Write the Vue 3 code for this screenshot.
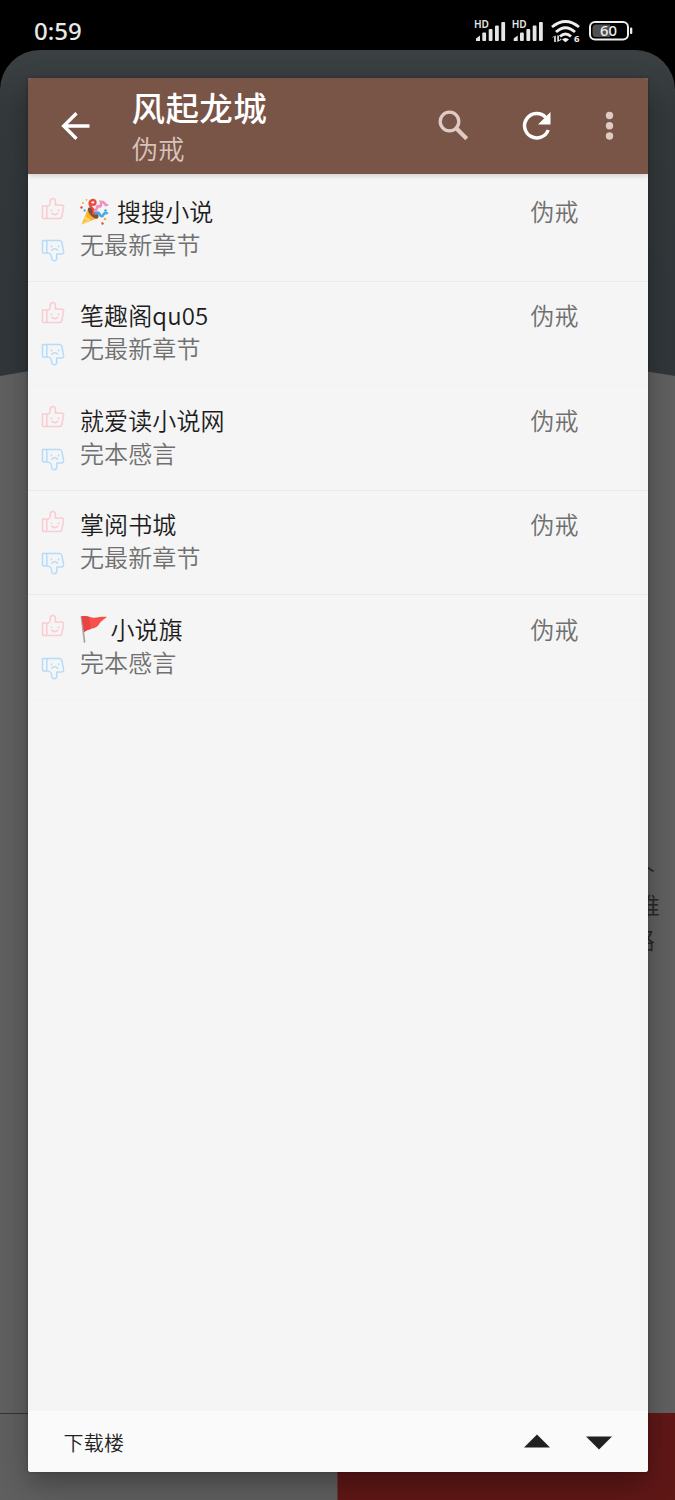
<script setup>
const sources = [
  { name: '搜搜小说', emoji: 'party', latest: '无最新章节', author: '伪戒' },
  { name: '笔趣阁qu05', latest: '无最新章节', author: '伪戒', faint: true },
  { name: '就爱读小说网', latest: '完本感言', author: '伪戒' },
  { name: '掌阅书城', latest: '无最新章节', author: '伪戒' },
  { name: '小说旗', emoji: 'flag', latest: '完本感言', author: '伪戒', faint: true },
]
</script>

<template>
  <div class="screen">
    <header class="status">
      <span class="clock">0:59</span>
      <svg class="indicators" width="162" height="30" viewBox="0 0 162 30">
        <g v-for="x in [0, 37.7]" :key="x" :transform="`translate(${x} 0)`" fill="#e6e6e6">
          <text x="0" y="13" font-size="10" font-weight="600" textLength="15" lengthAdjust="spacingAndGlyphs">HD</text>
          <path d="M2 26v-2.500l4-3V26z" />
          <rect x="8.3" y="17.5" width="3.8" height="8.5" rx="1" />
          <rect x="14.7" y="14" width="3.8" height="12" rx="1" />
          <rect x="21" y="10.5" width="3.8" height="15.5" rx="1" />
          <rect x="27.3" y="7" width="3.8" height="19" rx="1" />
        </g>
        <g fill="none" stroke="#eee" stroke-width="2.900">
          <path d="M78 12Q91.500 1 105 12" />
          <path d="M82 17Q91.500 8.500 101 17" />
          <path d="M86 21.500Q91.500 16.500 97 21.500" />
        </g>
        <path d="M88 24.500a4.600 4.600 0 0 1 7 0l-3.500 2.800z" fill="#eee" />
        <path d="M77.500 23.500l2.700-2.700V27h1.600v-6.500M83.300 27v-6.500h1.600v5l2.300-2.300v1.800z" fill="#eee" />
        <text x="100" y="27.300" font-size="9.500" font-weight="700" fill="#eee">6</text>
        <rect x="116" y="7" width="38" height="17.500" rx="5" fill="none" stroke="#eee" stroke-width="2" />
        <path d="M122 9.500h14v12.500h-14a3.500 3.500 0 0 1-3.500-3.500v-5.500a3.500 3.500 0 0 1 3.500-3.500z" fill="#505050" />
        <rect x="156" y="12.500" width="2.300" height="6.500" rx="1" fill="#eee" />
        <text x="126" y="21.200" font-size="14.500" font-weight="500" fill="#eee" textLength="17" lengthAdjust="spacingAndGlyphs">60</text>
      </svg>
    </header>

    <div class="page">
      <svg class="sheet" width="675" height="1450" viewBox="0 0 675 1450">
        <path d="M0 326Q337 266 675 326V1363H0z" fill="#606060" />
        <path d="M0 1363H338V1450H0z" fill="#5f5f5f" />
        <path d="M0 1363.500H338" stroke="#333" />
        <path d="M337.500 1363H675V1450H337.500z" fill="#5f1716" />
      </svg>
      <p class="intro"><span class="tail">个</span><span>唯</span><span class="tail">路</span></p>
    </div>

    <main class="dialog">
      <header class="toolbar">
        <svg class="back" width="30" height="30" viewBox="0 0 30 30">
          <path d="M28.500 15H3M15.500 2.200L2.700 15l12.800 12.800" fill="none" stroke="#fff" stroke-width="3.400" />
        </svg>
        <div class="heading">
          <h1>风起龙城</h1>
          <p>伪戒</p>
        </div>
        <div class="actions">
          <svg width="32" height="32" viewBox="0 0 32 32" fill="none" stroke="#e0cbc4">
            <circle cx="12.500" cy="11.500" r="9.300" stroke-width="3.300" />
            <path d="M19.500 18.500l10.200 10.200" stroke-width="4.200" />
          </svg>
          <svg width="32" height="32" viewBox="0 0 32 32">
            <path d="M24.500 7.200A12.200 12.200 0 1 0 27.200 20" fill="none" stroke="#fff" stroke-width="3.500" />
            <path d="M29.500 2v12.500H17z" fill="#fff" />
          </svg>
          <svg width="10" height="32" viewBox="0 0 10 32" fill="#e0cbc4">
            <circle cx="4.500" cy="5.500" r="3.700" /><circle cx="4.500" cy="15.700" r="3.700" /><circle cx="4.500" cy="26" r="3.700" />
          </svg>
        </div>
      </header>

      <ul class="list">
        <li v-for="item in sources" :key="item.name" class="row" :class="{ faint: item.faint }">
          <div class="votes">
            <svg class="like" width="24" height="24" viewBox="0 0 24 24">
              <g class="hand">
                <path d="M1.500 9h4.300v12.500H2.500a1 1 0 0 1-1-1zM5.800 9.500C9 9 9.300 7.500 9.300 4.500C9.300 .5 14.400.5 14.400 4.500V8h6.200c1.500 0 2.300 1 2 2.300l-1.700 9.200c-.3 1.300-1 2-2.300 2H5.800" />
                <path d="M10.500 13v.7M17.500 13v.7M10.800 16.200q3 2.800 6 0" />
              </g>
            </svg>
            <svg class="dislike" width="24" height="24" viewBox="0 0 24 24">
              <g class="hand">
                <path d="M1.500 2.500h4.300V15H2.500a1 1 0 0 1-1-1zM5.800 2.500h12.800c1.300 0 2 .7 2.300 2l1.700 9.200c.3 1.300-.5 2.300-2 2.300h-4.800v3.800c0 4-5.200 4-5.200 0c0-3-.8-4.600-4.800-4.800" />
                <path d="M10.500 8v.7M17.500 8v.7M10.800 12.200q3-3 6 0" />
              </g>
            </svg>
          </div>
          <div class="source">
            <div class="name">
              <svg v-if="item.emoji === 'party'" class="party" width="29" height="28" viewBox="0 0 29 28">
                <path d="M1.500 26.500L8.500 9.500Q14 12 18 20z" fill="#f6b52e" />
                <path d="M1.500 26.500l4-4 2 1.500zM5 18l6 4-3 1.500-4-2.500z" fill="#fdd663" />
                <ellipse cx="13.200" cy="15" rx="3.400" ry="7" transform="rotate(-42 13.200 15)" fill="#8c4b35" />
                <path d="M12.500 16.500C17 10 9 10 9.500 5.500C10 1 16 1 15.500 4.500C15 8 10 7 9.500 4" fill="none" stroke="#e94b40" stroke-width="2.300" />
                <path d="M14 14c2-2 4-3.500 3-6.500c1 1 4 2 4-1c0-3 1.500-4 4-.500c1 1.800 2 1 2.500 0" fill="none" stroke="#ef8fc4" stroke-width="2.700" />
                <path d="M15 16.500c2-3 4-2 4.500-.500c.5 2.500 3 3 4 .500c1-2 3-2 4-.500" fill="none" stroke="#48a9e6" stroke-width="2.700" />
                <g fill="#f4b22c"><circle cx="3" cy="5" r="1" /><circle cx="6.500" cy="1.800" r=".9" /><circle cx="20" cy="3" r=".9" /><circle cx="25" cy="21" r="1.300" /></g>
                <path d="M1 8l2 1-1 2-2-1zM22 24l2 1-1 2-2-1z" fill="#e94b40" />
                <path d="M4 11l2 1-1 2-1.500-1zM25 11l2 1-1 2-2-1z" fill="#43a5df" />
              </svg>
              <svg v-if="item.emoji === 'flag'" class="flag" width="28" height="28" viewBox="0 0 28 28">
                <path d="M1.500 2l3 25" stroke="#a8a8a8" stroke-width="1.800" stroke-linecap="round" />
                <path d="M1.500 1.500c5-1.500 9 1.500 13 1.200c4-.2 8-1.200 12.500-.7c-4 3-6 4-8.500 8c-2.500 4-9 3-14.500 7z" fill="#f8504b" />
                <path d="M1.500 1.500c3-.8 5-.5 7.500.5l2 12c-2.500.5-4.500 1.300-7 3z" fill="#e94441" />
              </svg>
              <span>{{ item.name }}</span>
            </div>
            <div class="latest">{{ item.latest }}</div>
          </div>
          <div class="author">{{ item.author }}</div>
        </li>
      </ul>

      <footer class="footer">
        <span class="current">下载楼</span>
        <svg width="26" height="14" viewBox="0 0 26 14"><path d="M0 13.500L13 .5l13 13z" fill="#202020" /></svg>
        <svg class="down" width="26" height="14" viewBox="0 0 26 14"><path d="M0 .5h26l-13 13z" fill="#202020" /></svg>
      </footer>
    </main>
  </div>
</template>

<style>
body {
  background: #000;
}
</style>

<style scoped>
.screen {
  position: relative;
  width: 675px;
  height: 1500px;
  overflow: hidden;
  background: #000;
  font-family: "Noto Sans CJK SC", "Noto Sans", sans-serif;
}
.status {
  display: flex;
  justify-content: space-between;
  height: 50px;
  padding: 0 39px 0 34px;
  color: #e8e8e8;
}
.clock {
  font: 500 24px/62px "Noto Sans", sans-serif;
}
.indicators {
  margin-top: 15px;
  font-family: "Noto Sans", sans-serif;
}
.page {
  position: relative;
  height: 1450px;
  border-radius: 40px 40px 0 0;
  overflow: hidden;
  background: linear-gradient(#3b4042, #34393b 60px, #30363a 320px);
}
.sheet {
  display: block;
}
.intro {
  position: absolute;
  left: 636px;
  top: 804px;
  display: flex;
  flex-direction: column;
  margin: 0;
  color: #282828;
  font-size: 24px;
  font-weight: 350;
  line-height: 34px;
}
.tail {
  margin-left: -5px;
}
.dialog {
  position: absolute;
  left: 27.5px;
  top: 77.500px;
  width: 620px;
  height: 1394.500px;
  display: flex;
  flex-direction: column;
  border-radius: 3px;
  overflow: hidden;
  background: #f5f5f5;
  box-shadow: 0 12px 28px rgba(0, 0, 0, .3), 0 0 3px rgba(0, 0, 0, .25);
}
.toolbar {
  flex: none;
  display: flex;
  align-items: center;
  height: 96.500px;
  padding: 0 33px;
  box-sizing: border-box;
  background: #795548;
  box-shadow: 0 1px 6px rgba(0, 0, 0, .2);
  z-index: 1;
}
.heading {
  margin-left: 41px;
  flex: 1;
}
.heading h1 {
  margin: 0;
  font-weight: 500;
  font-size: 33.5px;
  letter-spacing: .4px;
  line-height: 44px;
  color: #fff;
}
.heading p {
  margin: 0;
  font-size: 26.5px;
  font-weight: 350;
  line-height: 38px;
  color: #d7c3bb;
}
.actions {
  display: flex;
  align-items: center;
  gap: 52px;
}
.list {
  flex: 1;
  margin: 0;
  padding: 3.600px 0 0;
  list-style: none;
}
.row {
  display: flex;
  box-sizing: border-box;
  height: 104.400px;
  padding: 16.500px 69px 0 13px;
  border-bottom: 1px solid #e9e9e9;
}
.row.faint {
  border-bottom-color: #f1f1f1;
}
.votes {
  display: flex;
  flex-direction: column;
  gap: 17.500px;
  width: 39.500px;
  padding-top: 2.500px;
}
.hand {
  fill: none;
  stroke-width: 1.5;
  stroke-linecap: round;
  stroke-linejoin: round;
}
.like {
  stroke: #fbcbd2;
}
.dislike {
  stroke: #b5dcf8;
}
.source {
  flex: 1;
}
.name,
.latest,
.author {
  font-size: 24px;
  line-height: 33px;
  letter-spacing: .1px;
  font-weight: 350;
}
.name {
  display: flex;
  color: #1d1d1d;
}
.party {
  margin: 4px 8px 0 0;
}
.flag {
  margin: 3px 2.500px 0 0;
}
.latest,
.author {
  color: #707070;
}
.footer {
  flex: none;
  display: flex;
  align-items: center;
  height: 61.500px;
  padding: 0 36px;
  box-sizing: border-box;
  background: #fafafa;
  gap: 36px;
}
.current {
  flex: 1;
  padding-top: 2px;
  font-size: 20px;
  font-weight: 350;
  letter-spacing: .2px;
  color: #222;
}
.down {
  margin-top: 3px;
}
</style>
